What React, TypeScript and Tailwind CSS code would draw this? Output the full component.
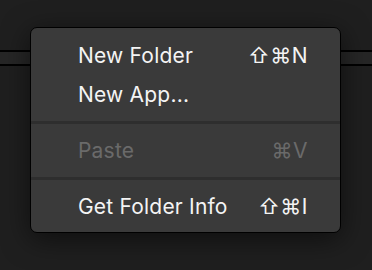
import React from "react";

type Item = { label: string; shortcut?: string; disabled?: boolean };

const groups: Item[][] = [
  [
    { label: "New Folder", shortcut: "⇧⌘N" },
    { label: "New App..." },
  ],
  [{ label: "Paste", shortcut: "⌘V", disabled: true }],
  [{ label: "Get Folder Info", shortcut: "⇧⌘I" }],
];

function MenuRow({ item }: { item: Item }) {
  return (
    <div
      className={
        "flex h-[39px] items-center justify-between pl-[47px] pr-[32px] text-[21px] leading-[39px] tracking-[0.2px] " +
        (item.disabled ? "text-[#6a6a6a]" : "text-[#f4f4f4]")
      }
    >
      <span>{item.label}</span>
      {item.shortcut && <span className="tracking-[0.5px]">{item.shortcut}</span>}
    </div>
  );
}

export default function App() {
  return (
    <div
      className="relative h-[270px] w-[372px] overflow-hidden bg-[#1f1f1f]"
      style={{ fontFamily: "Inter, 'DejaVu Sans', sans-serif" }}
    >
      {/* toolbar strip behind the menu */}
      <div className="pt-[50px]">
        <div className="h-[16px] border-y-2 border-black bg-[#262626]" />
      </div>

      {/* context menu */}
      <div className="absolute left-[30px] top-[27px] w-[311px] rounded-[7px] border border-black bg-[#3a3a3a] pb-[6px] pt-[8px] shadow-[0_6px_28px_rgba(0,0,0,0.55)]">
        {groups.map((g, i) => (
          <div key={i}>
            {i > 0 && <div className="my-[7px] h-[3px] bg-[#2e2e2e]" />}
            {g.map((item) => (
              <MenuRow key={item.label} item={item} />
            ))}
          </div>
        ))}
      </div>
    </div>
  );
}
